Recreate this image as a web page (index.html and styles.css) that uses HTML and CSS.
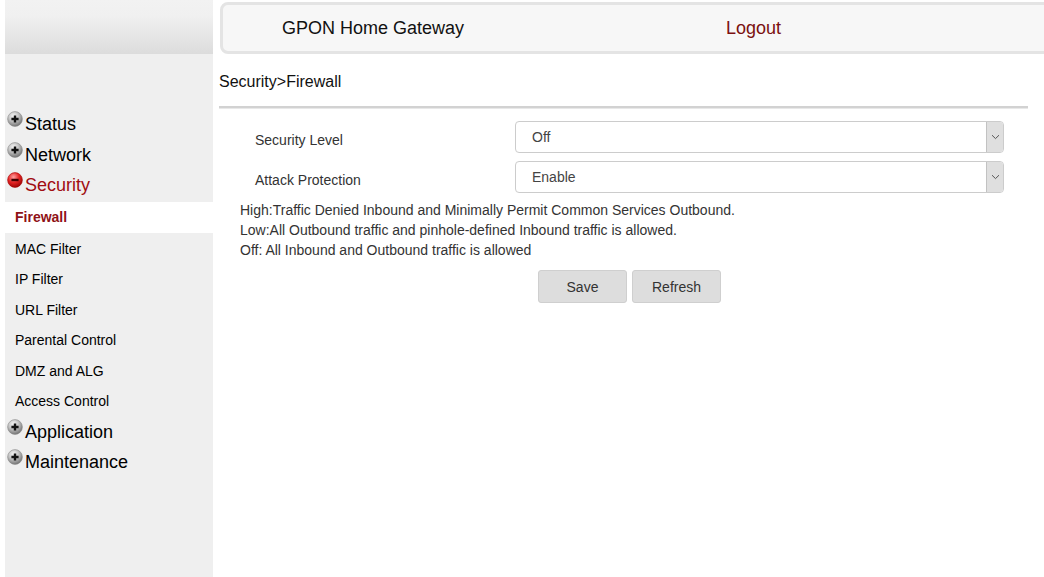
FILE: index.html
```html
<!DOCTYPE html>
<html>

<head>
    <meta charset="utf-8">
    <title>GPON Home Gateway</title>
    <link rel="stylesheet" href="styles.css">
</head>

<body>
    <div id="menu">
        <div class="menu-top"></div>
        <ul class="nav">
            <li class="nav-main">
                <svg class="ico" width="16" height="16" viewBox="0 0 16 16"><use href="#plus-ico"/></svg>Status
            </li>
            <li class="nav-main">
                <svg class="ico" width="16" height="16" viewBox="0 0 16 16"><use href="#plus-ico"/></svg>Network
            </li>
            <li class="nav-main open">
                <svg class="ico" width="16" height="16" viewBox="0 0 16 16"><use href="#minus-ico"/></svg>Security
            </li>
            <li class="nav-sub active">Firewall</li>
            <li class="nav-sub">MAC Filter</li>
            <li class="nav-sub">IP Filter</li>
            <li class="nav-sub">URL Filter</li>
            <li class="nav-sub">Parental Control</li>
            <li class="nav-sub">DMZ and ALG</li>
            <li class="nav-sub">Access Control</li>
            <li class="nav-main">
                <svg class="ico" width="16" height="16" viewBox="0 0 16 16"><use href="#plus-ico"/></svg>Application
            </li>
            <li class="nav-main">
                <svg class="ico" width="16" height="16" viewBox="0 0 16 16"><use href="#plus-ico"/></svg>Maintenance
            </li>
        </ul>
    </div>

    <div id="content">
        <div class="header">
            <span class="title">GPON Home Gateway</span>
            <a class="logout" href="#">Logout</a>
        </div>
        <div class="crumb">Security&gt;Firewall</div>
        <div class="rule"></div>

        <div class="form">
            <div class="row">
                <label class="lbl">Security Level</label>
                <div class="sel">
                    <select>
                        <option>Off</option>
                        <option>Low</option>
                        <option>High</option>
                    </select>
                    <span class="arrow"><svg width="9" height="6" viewBox="0 0 9 6"><path d="M1 1.2 L4.5 4.6 L8 1.2" fill="none" stroke="#555" stroke-width="1"/></svg></span>
                </div>
            </div>
            <div class="row">
                <label class="lbl">Attack Protection</label>
                <div class="sel">
                    <select>
                        <option>Enable</option>
                        <option>Disable</option>
                    </select>
                    <span class="arrow"><svg width="9" height="6" viewBox="0 0 9 6"><path d="M1 1.2 L4.5 4.6 L8 1.2" fill="none" stroke="#555" stroke-width="1"/></svg></span>
                </div>
            </div>
            <div class="notes">
                <div>High:Traffic Denied Inbound and Minimally Permit Common Services Outbound.</div>
                <div>Low:All Outbound traffic and pinhole-defined Inbound traffic is allowed.</div>
                <div>Off: All Inbound and Outbound traffic is allowed</div>
            </div>
            <div class="buttons">
                <button class="btn">Save</button>
                <button class="btn">Refresh</button>
            </div>
        </div>
    </div>

    <svg width="0" height="0" style="position:absolute">
        <defs>
            <radialGradient id="g-gray" cx="0.4" cy="0.3" r="0.75">
                <stop offset="0" stop-color="#f6f6f6"/>
                <stop offset="0.45" stop-color="#c4c4c4"/>
                <stop offset="1" stop-color="#6a6a6a"/>
            </radialGradient>
            <radialGradient id="g-red" cx="0.4" cy="0.3" r="0.75">
                <stop offset="0" stop-color="#ffa0a0"/>
                <stop offset="0.5" stop-color="#e42424"/>
                <stop offset="1" stop-color="#940000"/>
            </radialGradient>
            <g id="plus-ico">
                <circle cx="8" cy="8" r="7.4" fill="url(#g-gray)" stroke="#8a8a8a" stroke-width="0.6"/>
                <path d="M4.4 8 H11.6 M8 4.4 V11.6" stroke="#111" stroke-width="2.4"/>
            </g>
            <g id="minus-ico">
                <circle cx="8" cy="8" r="7.4" fill="url(#g-red)" stroke="#a00" stroke-width="0.6"/>
                <path d="M4.4 8 H11.6" stroke="#400000" stroke-width="2.4"/>
            </g>
        </defs>
    </svg>
</body>

</html>
```

FILE: styles.css
```css
body {
    margin: 0;
    display: flex;
    min-height: 577px;
    overflow: hidden;
    font-family: "Liberation Sans", Arial, Helvetica, sans-serif;
    color: #000;
    background: #fff;
}

#menu {
    width: 208px;
    margin-left: 5px;
    background-color: #efefef;
    min-height: 577px;
}

.menu-top {
    height: 54px;
    background: linear-gradient(#f2f2f2, #f0f0f0 30%, #dcdcdc);
}

.nav {
    list-style: none;
    margin: 55px 0 0 0;
    padding: 0;
}

.nav-main {
    height: 30.5px;
    line-height: 30.5px;
    font-size: 18px;
    padding-left: 2px;
    white-space: nowrap;
}

.nav-main.open {
    color: #a10d12;
}

.nav-main .ico {
    vertical-align: 3px;
    margin-right: 2px;
}

.nav-sub {
    height: 30.5px;
    line-height: 30.5px;
    font-size: 14px;
    padding-left: 10px;
}

.nav-sub.active {
    background-color: #fff;
    color: #8f1217;
    font-weight: bold;
    margin: 1px 0;
    height: 31px;
    line-height: 31px;
}

#content {
    flex: 1;
    padding-left: 6px;
}

.header {
    margin: 2px -20px 0 1px;
    height: 46px;
    border: 3px solid #e4e4e4;
    border-radius: 8px;
    background-color: #f7f7f7;
    display: flex;
    align-items: center;
    padding-left: 59px;
    font-size: 18px;
}

.header .title {
    width: 444px;
    color: #111;
}

.header .logout {
    color: #7b1010;
    text-decoration: none;
}

.crumb {
    margin-top: 19px;
    line-height: 18px;
    font-size: 16px;
    color: #111;
}

.rule {
    margin-top: 15px;
    width: 809px;
    height: 0;
    border-top: 2px solid #d2d2d2;
    border-bottom: 1px solid #e8e8e8;
}

.form {
    padding-top: 12px;
    font-size: 14px;
    color: #333;
}

.row {
    display: flex;
    height: 32px;
    margin-bottom: 8px;
}

.lbl {
    width: 260px;
    padding-left: 36px;
    padding-top: 11px;
    line-height: 16px;
}

.sel {
    position: relative;
    width: 489px;
    height: 32px;
}

.sel select {
    -webkit-appearance: none;
    appearance: none;
    width: 100%;
    height: 32px;
    border: 1px solid #cccccc;
    border-radius: 4px;
    background: #fff;
    padding: 0 0 0 16px;
    font: 14px "Liberation Sans", Arial, sans-serif;
    color: #444;
    outline: none;
}

.sel .arrow {
    position: absolute;
    right: 1px;
    top: 1px;
    bottom: 1px;
    width: 16px;
    background-color: #dfdfdf;
    border-left: 1px solid #c2c2c2;
    border-radius: 0 3px 3px 0;
    display: flex;
    align-items: center;
    justify-content: center;
}

.notes {
    margin-top: -1px;
    padding-left: 21px;
    line-height: 20px;
    font-size: 14px;
    color: #333;
}

.buttons {
    margin-top: 10px;
    padding-left: 319px;
    display: flex;
    gap: 5px;
}

.btn {
    width: 89px;
    height: 33px;
    background-color: #dddddd;
    border: 1px solid #cfcfcf;
    border-radius: 3px;
    font: 14px "Liberation Sans", Arial, sans-serif;
    color: #333;
}
```
